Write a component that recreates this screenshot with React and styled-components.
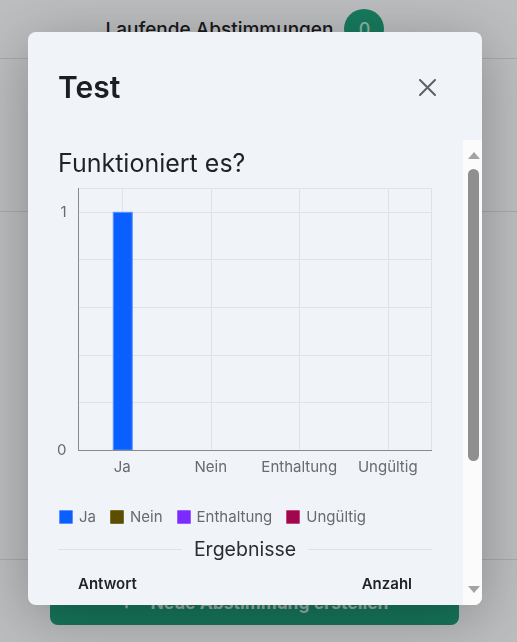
import React from 'react';
import styled, { createGlobalStyle } from 'styled-components';

const GlobalStyle = createGlobalStyle`
  html, body {
    margin: 0;
    padding: 0;
    background: #fbfcfe;
    font-family: Inter, "Noto Sans", sans-serif;
  }
`;

const ScPage = styled.div`
  height: 642px;
  overflow: hidden;
  display: flex;
  flex-direction: column;

  .pgHeader {
    height: 59px;
    border-bottom: 1px solid #dfe1e4;
    display: flex;
    align-items: center;
    justify-content: center;
    gap: 11px;
    padding-right: 27px;
    box-sizing: border-box;
    font-size: 19px;
    font-weight: 500;
    color: #1f2328;
  }

  .pgBadge {
    width: 40px;
    height: 40px;
    border-radius: 50%;
    background: #1fa37c;
    color: #b9efdc;
    display: flex;
    align-items: center;
    justify-content: center;
    font-size: 18px;
  }

  .pgBand {
    height: 152px;
    border-bottom: 1px solid #dfe1e4;
  }

  .pgList {
    height: 347px;
    border-bottom: 1px solid #dfe1e4;
  }

  .pgFooter {
    padding: 20px 58px 0 50px;
  }
`;

const NewButton = styled.div`
  height: 45px;
  border-radius: 8px;
  background: #1e9f79;
  color: rgba(255, 255, 255, 0.8);
  display: flex;
  align-items: center;
  justify-content: center;
  gap: 18px;
  font-size: 17.5px;
  font-weight: 700;
`;

const Overlay = styled.div`
  position: fixed;
  inset: 0;
  background: rgba(0, 0, 0, 0.25);
  display: flex;
  align-items: flex-start;
`;

const Modal = styled.div`
  margin: 32px 0 0 28px;
  width: 454px;
  height: 573px;
  background: #f0f4f8;
  border-radius: 8px;
  overflow: hidden;
  display: flex;
  flex-direction: column;
  box-shadow: 0 12px 60px rgba(0, 0, 0, 0.28);
`;

const ModalHeader = styled.div`
  height: 108px;
  flex: none;
  padding: 2px 46px 0 30px;
  box-sizing: border-box;
  display: flex;
  align-items: center;
  justify-content: space-between;

  h2 {
    margin: 0;
    font-size: 30px;
    font-weight: 600;
    color: #1b1f24;
  }
`;

const CloseButton = styled.button`
  border: 0;
  background: none;
  padding: 0;
  width: 17px;
  height: 17px;
  display: flex;
  cursor: pointer;
`;

const ModalBody = styled.div`
  flex: 1;
  min-height: 0;
  display: flex;
`;

const Content = styled.div`
  flex: 1;
  overflow: hidden;
  padding: 9px 31px 0 30px;
`;

const Question = styled.h3`
  margin: 0;
  font-size: 25px;
  line-height: 29px;
  font-weight: 400;
  color: #1f2328;
`;

const ChartSvg = styled.svg`
  display: block;
  margin-top: 6px;
  font-family: Inter, "Noto Sans", sans-serif;
  font-size: 15px;
`;

const Legend = styled.div`
  margin-top: 31px;
  padding-left: 1px;
  display: flex;
  gap: 14px;
  line-height: 20px;
  font-size: 15px;
  color: #676a6e;
`;

const LegendItem = styled.div`
  display: flex;
  align-items: center;
  gap: 6px;

  &::before {
    content: '';
    width: 14px;
    height: 14px;
    box-sizing: border-box;
    border-radius: 1px;
    background: ${({ $color }) => $color};
    border: 1px solid ${({ $border }) => $border};
  }
`;

const Divider = styled.div`
  margin-top: 10px;
  height: 24px;
  display: flex;
  align-items: center;
  gap: 12px;
  font-size: 19.5px;
  color: #2a2e33;

  &::before,
  &::after {
    content: '';
    flex: 1;
    height: 1px;
    background: #dfe3e8;
  }
`;

const ResultTable = styled.table`
  margin-top: 13px;
  width: 100%;
  border-collapse: collapse;
  font-size: 15px;
  line-height: 20px;
  color: #202327;

  th {
    font-weight: 600;
    text-align: left;
    padding: 0 20px;
  }

  th:last-child {
    text-align: right;
  }
`;

const Scrollbar = styled.div`
  width: 19px;
  flex: none;
  background: #fbfbfb;
  display: flex;
  flex-direction: column;
  align-items: center;
  padding: 12px 0 12px 2px;
  box-sizing: border-box;
`;

const Arrow = styled.div`
  width: 0;
  height: 0;
  border-left: 6.5px solid transparent;
  border-right: 6.5px solid transparent;
  ${({ $down }) =>
    $down
      ? 'border-top: 7px solid #a3a3a3; margin-top: auto;'
      : 'border-bottom: 7px solid #a3a3a3;'}
`;

const Thumb = styled.div`
  margin-top: 10px;
  width: 11px;
  height: 292px;
  border-radius: 6px;
  background: #8f8f8f;
`;

const answers = [
  { label: 'Ja', value: 1, color: '#0a5fff', border: '#5b90ff' },
  { label: 'Nein', value: 0, color: '#5b4e00', border: '#7a6e2a' },
  { label: 'Enthaltung', value: 0, color: '#7b2bff', border: '#9a5cff' },
  { label: 'Ungültig', value: 0, color: '#a1074d', border: '#c04a7d' },
];

const plot = { left: 20, right: 374, top: 4, bottom: 266 };
const yMax = 1.1;
const yOf = (v) => plot.bottom - (v / yMax) * (plot.bottom - plot.top);
const crisp = (n) => Math.round(n) + 0.5;
const step = (plot.right - plot.left) / answers.length;
const xOf = (i) => plot.left + (i + 0.5) * step;

const Chart = () => (
  <ChartSvg width="375" height="292" viewBox="0 0 375 292">
    {[yMax, 0.2, 0.4, 0.6, 0.8, 1].map((v) => (
      <line key={v} x1={plot.left} x2={plot.right} y1={crisp(yOf(v))} y2={crisp(yOf(v))} stroke="#e1e2e4" />
    ))}
    {answers.map((a, i) => (
      <line key={a.label} x1={crisp(xOf(i))} x2={crisp(xOf(i))} y1={plot.top} y2={plot.bottom} stroke="#e1e2e4" />
    ))}
    <line x1={crisp(plot.right) - 1} x2={crisp(plot.right) - 1} y1={plot.top} y2={plot.bottom} stroke="#e1e2e4" />
    {answers.map((a, i) => {
      const top = yOf(a.value);
      return a.value > 0 ? (
        <rect
          key={a.label}
          x={xOf(i) - 9}
          y={top + 0.5}
          width="19"
          height={plot.bottom - top - 0.5}
          fill={a.color}
          stroke={a.border}
        />
      ) : null;
    })}
    <line x1={plot.left + 0.5} x2={plot.left + 0.5} y1={plot.top} y2={plot.bottom + 0.5} stroke="#8a8a8a" />
    <line x1={plot.left} x2={plot.right} y1={plot.bottom + 0.5} y2={plot.bottom + 0.5} stroke="#8a8a8a" />
    <text x="8.5" y={yOf(1) + 5} textAnchor="end" fill="#676a6e">1</text>
    <text x="8.5" y={yOf(0) + 5} textAnchor="end" fill="#676a6e">0</text>
    {answers.map((a, i) => (
      <text key={a.label} x={xOf(i)} y="287.5" textAnchor="middle" fill="#676a6e">{a.label}</text>
    ))}
  </ChartSvg>
);

const App = () => (
  <>
    <GlobalStyle />
    <ScPage>
      <div className="pgHeader">
        <span>Laufende Abstimmungen</span>
        <span className="pgBadge">0</span>
      </div>
      <div className="pgBand" />
      <div className="pgList" />
      <div className="pgFooter">
        <NewButton>
          <span>+</span>
          <span>Neue Abstimmung erstellen</span>
        </NewButton>
      </div>
    </ScPage>
    <Overlay>
      <Modal>
        <ModalHeader>
          <h2>Test</h2>
          <CloseButton aria-label="Schließen">
            <svg width="17" height="17" viewBox="0 0 17 17">
              <path d="M1 1 L16 16 M16 1 L1 16" stroke="#5f6165" strokeWidth="2" strokeLinecap="round" />
            </svg>
          </CloseButton>
        </ModalHeader>
        <ModalBody>
          <Content>
            <Question>Funktioniert es?</Question>
            <Chart />
            <Legend>
              {answers.map((a) => (
                <LegendItem key={a.label} $color={a.color} $border={a.border}>{a.label}</LegendItem>
              ))}
            </Legend>
            <Divider>Ergebnisse</Divider>
            <ResultTable>
              <thead>
                <tr>
                  <th>Antwort</th>
                  <th>Anzahl</th>
                </tr>
              </thead>
            </ResultTable>
          </Content>
          <Scrollbar>
            <Arrow />
            <Thumb />
            <Arrow $down />
          </Scrollbar>
        </ModalBody>
      </Modal>
    </Overlay>
  </>
);

export default App;
